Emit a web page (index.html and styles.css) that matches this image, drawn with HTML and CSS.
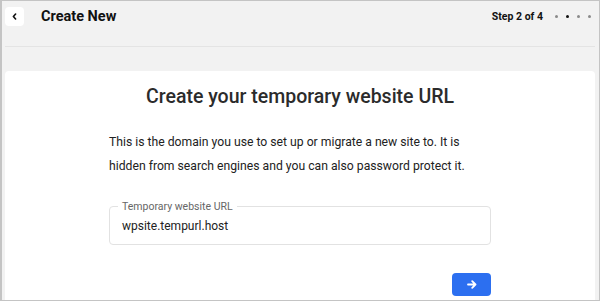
FILE: index.html
```html
<!DOCTYPE html>
<html>
<head>
<meta charset="utf-8">
<link rel="stylesheet" href="styles.css">
</head>
<body>
<div class="app">
  <header class="topbar">
    <button class="back" aria-label="Back">
      <svg width="5" height="7" viewBox="0 0 5 7"><path d="M3.6 1 L1.4 3.5 L3.6 6" fill="none" stroke="#111" stroke-width="1.6" stroke-linecap="round" stroke-linejoin="round"/></svg>
    </button>
    <h1 class="page-title">Create New</h1>
    <div class="steps">
      <span class="step-label">Step 2 of 4</span>
      <span class="dots"><i class="dot"></i><i class="dot active"></i><i class="dot"></i><i class="dot"></i></span>
    </div>
  </header>
  <div class="divider"></div>
  <main class="card">
    <div class="column">
      <h2 class="card-title">Create your temporary website URL</h2>
      <p class="desc">This is the domain you use to set up or migrate a new site to. It is hidden from search engines and you can also password protect it.</p>
      <fieldset class="field">
        <legend class="field-label">Temporary website URL</legend>
        <div class="field-value">wpsite.tempurl.host</div>
      </fieldset>
      <div class="actions">
        <button class="next" aria-label="Next">
          <svg width="10" height="9" viewBox="0 0 10 9"><path d="M1 4.5 H8.5 M5.2 1.2 L8.5 4.5 L5.2 7.8" fill="none" stroke="#fff" stroke-width="1.8" stroke-linecap="round" stroke-linejoin="round"/></svg>
        </button>
      </div>
    </div>
  </main>
</div>
</body>
</html>
```
FILE: styles.css
```css
* { box-sizing: border-box; }
html, body { margin: 0; padding: 0; }
body {
  font-family: Roboto, "Liberation Sans", Arial, sans-serif;
  color: #222;
  background: #f2f2f2;
}
.app {
  width: 600px;
  height: 301px;
  border: 1px solid #c4c4c4;
  border-left-width: 2px;
  background: #f2f2f2;
  padding: 0 4px 0 2px;
  display: flex;
  flex-direction: column;
  overflow: hidden;
}
.topbar {
  height: 31px;
  flex: none;
  display: flex;
  align-items: center;
  padding-left: 1px;
}
.back {
  width: 19px;
  height: 19px;
  border: 0;
  border-radius: 4px;
  background: #fff;
  padding: 0;
  display: flex;
  align-items: center;
  justify-content: center;
  cursor: pointer;
}
.page-title {
  margin: 0 0 0 17px;
  font-size: 14.5px;
  font-weight: 700;
  color: #111;
}
.steps {
  margin-left: auto;
  display: flex;
  align-items: center;
  gap: 12px;
}
.step-label {
  font-size: 10.5px;
  font-weight: 700;
  color: #111;
}
.dots {
  display: flex;
  gap: 8px;
  padding-right: 4px;
}
.dot {
  width: 3px;
  height: 3px;
  border-radius: 50%;
  background: #8a8a8a;
}
.dot.active { background: #111; }
.divider {
  flex: none;
  height: 1px;
  margin: 14px 0 24px 1px;
  background: #e4e4e4;
}
.card {
  flex: 1;
  background: #fff;
  border-radius: 4px 4px 0 0;
  margin-left: 1px;
  padding-top: 14px;
}
.column {
  width: 382px;
  margin: 0 auto;
}
.card-title {
  margin: 0;
  font-size: 19.5px;
  line-height: 24px;
  font-weight: 500;
  text-align: center;
  color: #2b2b2b;
}
.desc {
  margin: 21px 0 0;
  font-size: 12.2px;
  line-height: 24px;
  color: #222;
}
.field {
  margin: 22px 0 0;
  padding: 0 0 9px 0;
  border: 1px solid #e2e2e2;
  border-radius: 4px;
  min-width: 0;
}
.field-label {
  margin-left: 8px;
  padding: 0 4px;
  font-size: 10.5px;
  line-height: 13px;
  color: #666;
}
.field-value {
  margin: 4px 0 0 12px;
  font-size: 12px;
  line-height: 18px;
  color: #222;
}
.actions {
  display: flex;
  justify-content: flex-end;
  margin-top: 28px;
}
.next {
  width: 39px;
  height: 23px;
  border: 0;
  border-radius: 4px;
  background: #2c6ff0;
  padding: 0;
  display: flex;
  align-items: center;
  justify-content: center;
  cursor: pointer;
}
```
